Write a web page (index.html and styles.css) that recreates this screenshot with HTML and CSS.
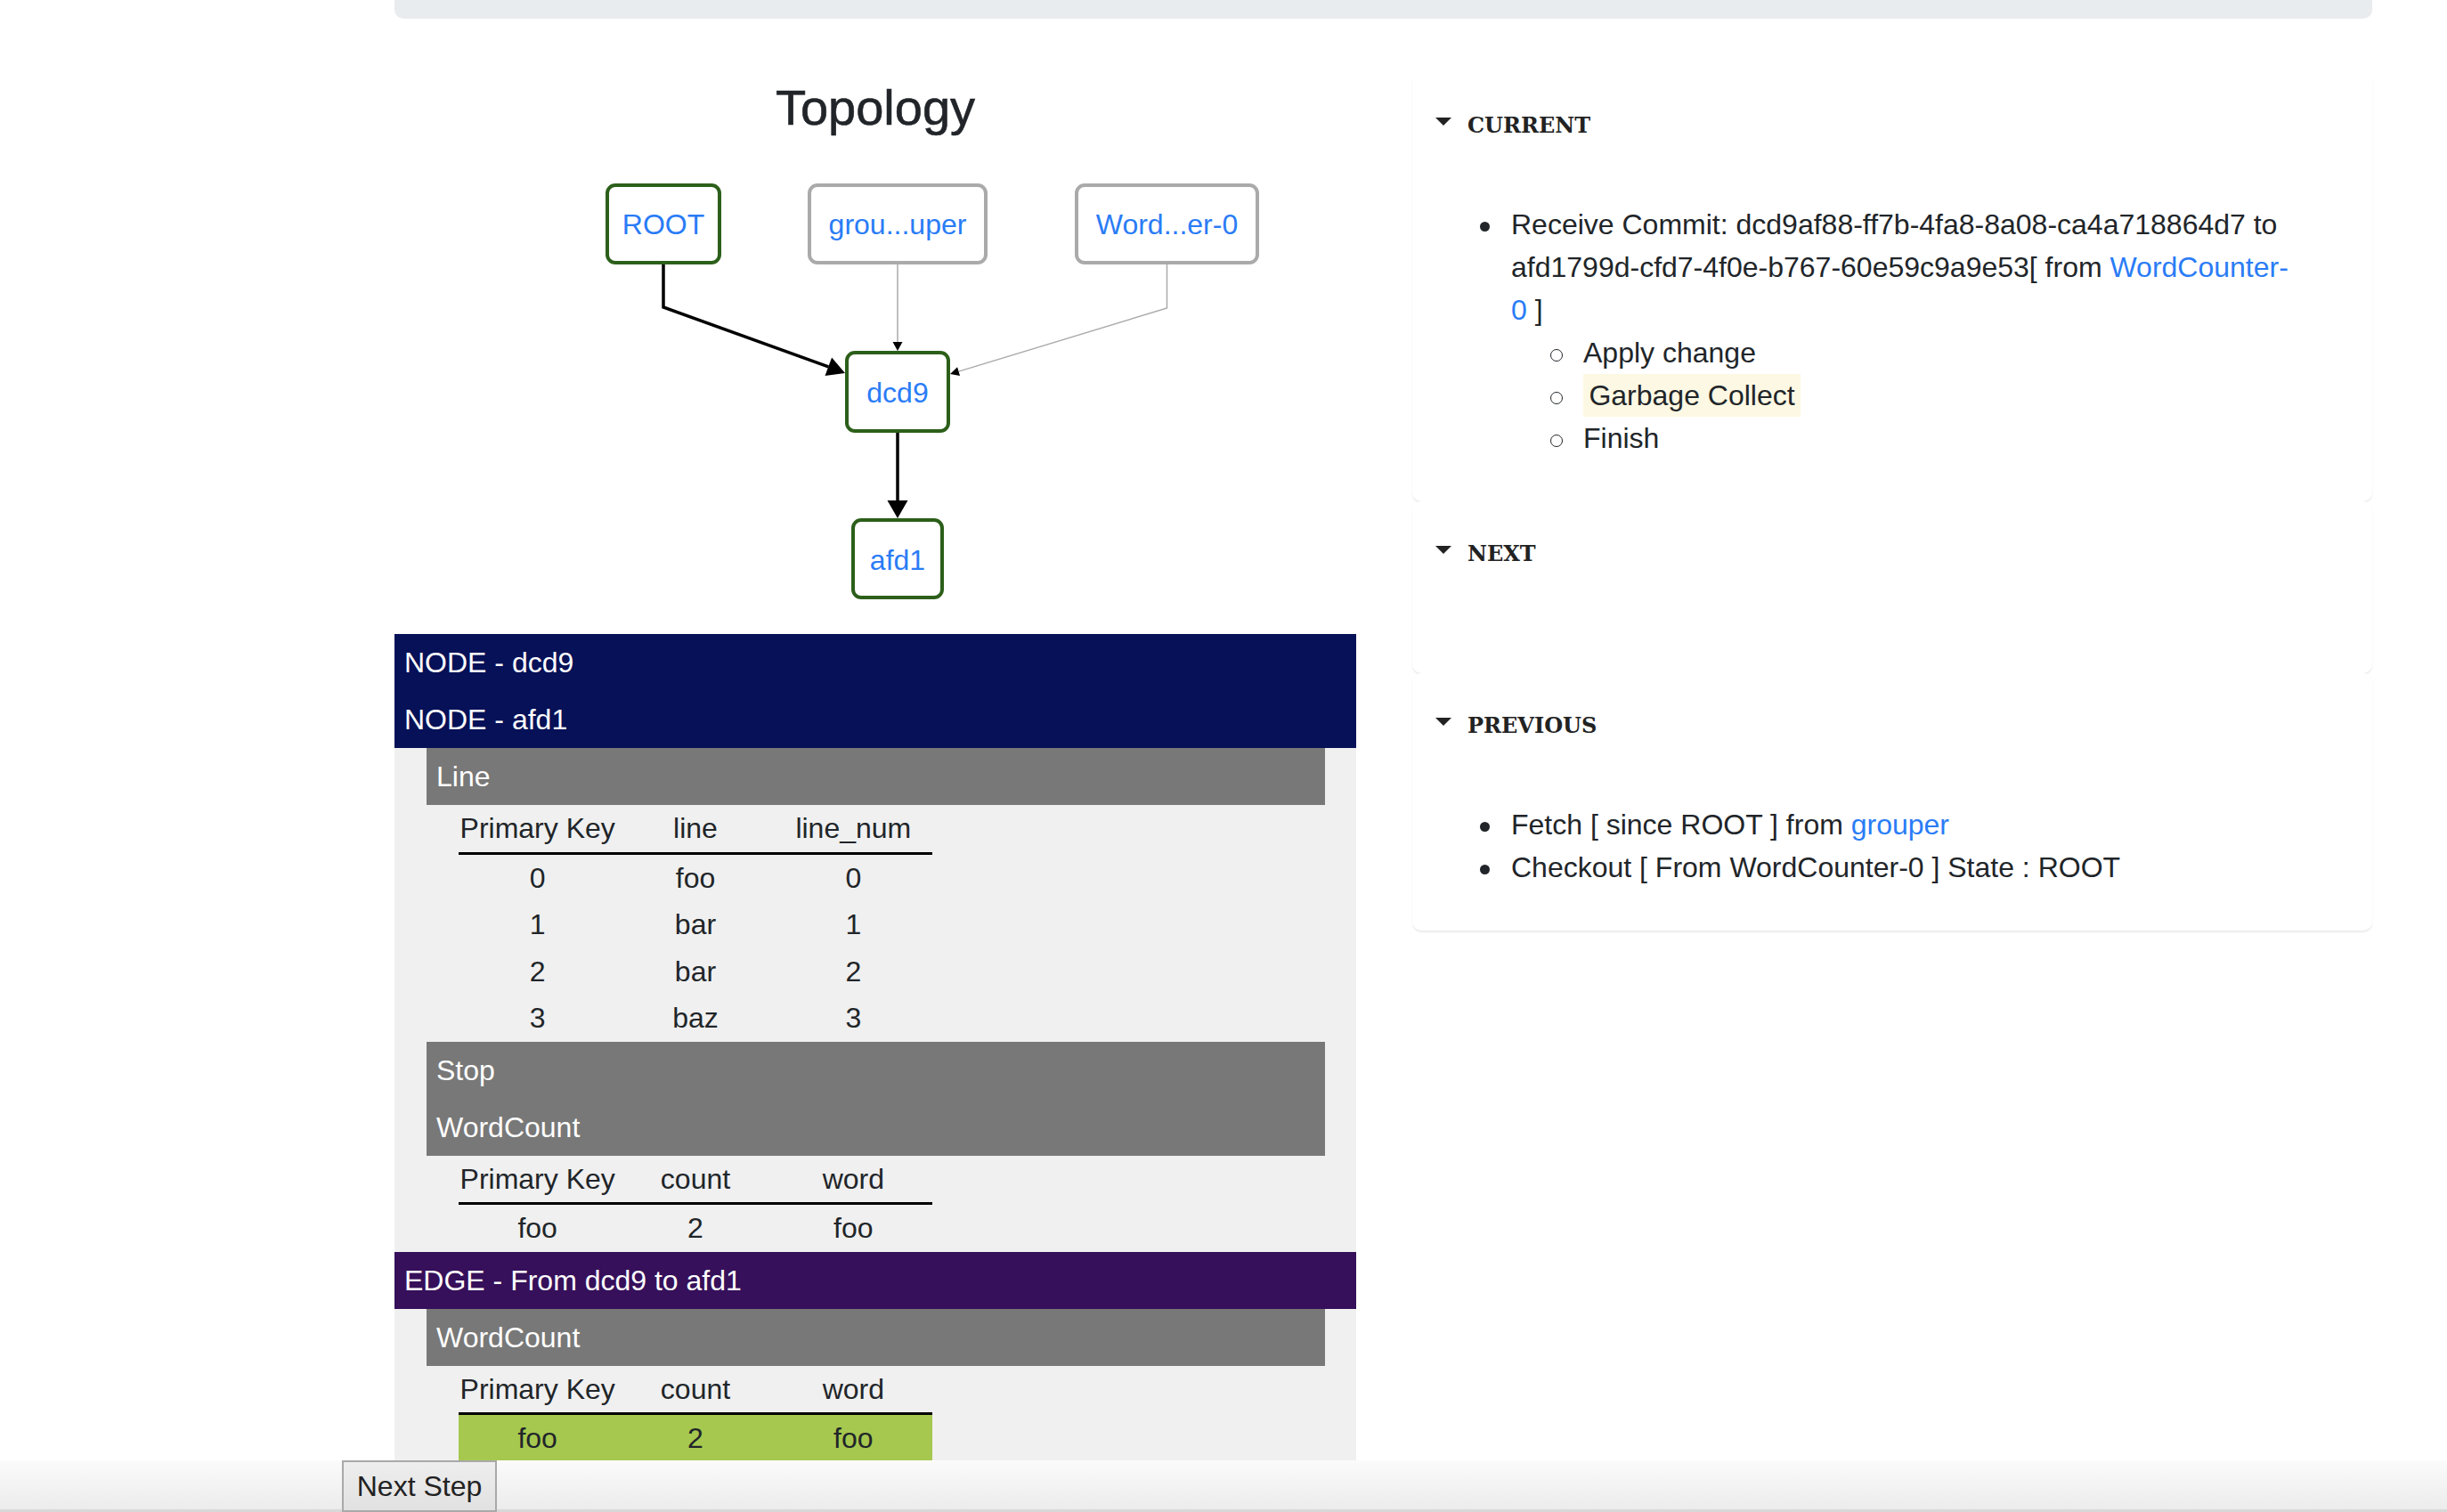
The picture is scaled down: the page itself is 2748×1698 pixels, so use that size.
FILE: index.html
```html
<!DOCTYPE html>
<html lang="en">
<head>
<meta charset="utf-8">
<title>Topology</title>
<link rel="stylesheet" href="styles.css">
</head>
<body>
<div class="page">
  <div class="topbar"></div>
  <div class="columns">
    <div class="left">
      <h3 class="title">Topology</h3>
      <svg class="graph" width="1080" height="558" viewBox="0 0 1080 558">
        <path d="M302 143 L302 191 L487.3 257.8" fill="none" stroke="#000" stroke-width="3.5"/>
        <polygon points="506,265 491.1,247.5 483.5,268.1" fill="#000"/>
        <path d="M565 143 L565 231" fill="none" stroke="#aaa" stroke-width="1.5"/>
        <polygon points="565,240 559.5,230 570.5,230" fill="#000"/>
        <path d="M867.5 143 L867.5 192 L633.6 263.1" fill="none" stroke="#aaa" stroke-width="1.5"/>
        <polygon points="624,266 635,267.9 632.1,258.3" fill="#000"/>
        <path d="M565 332 L565 410" fill="none" stroke="#000" stroke-width="3.5"/>
        <polygon points="565,428 553.5,408 576.5,408" fill="#000"/>

        <rect class="node node-active" x="239" y="54" width="126" height="87" rx="9"/>
        <text class="label" x="302" y="109">ROOT</text>
        <rect class="node node-idle" x="466" y="54" width="198" height="87" rx="9"/>
        <text class="label" x="565" y="109">grou...uper</text>
        <rect class="node node-idle" x="766" y="54" width="203" height="87" rx="9"/>
        <text class="label" x="867.5" y="109">Word...er-0</text>
        <rect class="node node-active" x="508" y="242" width="114" height="88" rx="9"/>
        <text class="label" x="565" y="298">dcd9</text>
        <rect class="node node-active" x="515" y="430" width="100" height="87" rx="9"/>
        <text class="label" x="565" y="486">afd1</text>
      </svg>

      <div class="inspector">
        <div class="sec sec-node">NODE - dcd9</div>
        <div class="sec sec-node">NODE - afd1</div>
        <div class="sec-body">
          <div class="tbl-title">Line</div>
          <table class="data">
            <thead><tr><th>Primary Key</th><th>line</th><th>line_num</th></tr></thead>
            <tbody>
              <tr><td>0</td><td>foo</td><td>0</td></tr>
              <tr><td>1</td><td>bar</td><td>1</td></tr>
              <tr><td>2</td><td>bar</td><td>2</td></tr>
              <tr><td>3</td><td>baz</td><td>3</td></tr>
            </tbody>
          </table>
          <div class="tbl-title">Stop</div>
          <div class="tbl-title">WordCount</div>
          <table class="data">
            <thead><tr><th>Primary Key</th><th>count</th><th>word</th></tr></thead>
            <tbody>
              <tr><td>foo</td><td>2</td><td>foo</td></tr>
            </tbody>
          </table>
        </div>
        <div class="sec sec-edge">EDGE - From dcd9 to afd1</div>
        <div class="sec-body">
          <div class="tbl-title">WordCount</div>
          <table class="data">
            <thead><tr><th>Primary Key</th><th>count</th><th>word</th></tr></thead>
            <tbody>
              <tr class="changed"><td>foo</td><td>2</td><td>foo</td></tr>
            </tbody>
          </table>
        </div>
      </div>
    </div>

    <div class="right">
      <details class="card" open>
        <summary><span class="caret"></span>CURRENT</summary>
        <div class="card-content">
          <ul class="events">
            <li>Receive Commit: dcd9af88-ff7b-4fa8-8a08-ca4a718864d7 to<br>afd1799d-cfd7-4f0e-b767-60e59c9a9e53[ from <a href="#">WordCounter-<br>0</a> ]
              <ul class="steps">
                <li>Apply change</li>
                <li><mark>Garbage Collect</mark></li>
                <li>Finish</li>
              </ul>
            </li>
          </ul>
        </div>
      </details>
      <details class="card" open>
        <summary><span class="caret"></span>NEXT</summary>
        <div class="card-content">
          <ul class="events"></ul>
        </div>
      </details>
      <details class="card" open>
        <summary><span class="caret"></span>PREVIOUS</summary>
        <div class="card-content">
          <ul class="events">
            <li>Fetch [ since ROOT ] from <a href="#">grouper</a></li>
            <li>Checkout [ From WordCounter-0 ] State : ROOT</li>
          </ul>
        </div>
      </details>
    </div>
  </div>
</div>

<div class="footer">
  <button class="next" type="button">Next Step</button>
</div>
</body>
</html>
```

FILE: styles.css
```css
* {
  box-sizing: border-box;
}

html,
body {
  margin: 0;
  overflow: hidden;
}

body {
  width: 2748px;
  height: 1698px;
  font-family: "Liberation Sans", Arial, sans-serif;
  font-size: 32px;
  line-height: 1.5;
  color: #212529;
  background: #fff;
}

.page {
  padding-left: 443px;
  width: 2664px;
}

.topbar {
  height: 21px;
  background: #e9ecef;
  border-radius: 0 0 10px 10px;
}

.columns {
  display: flex;
  gap: 63px;
}

.left {
  width: 1080px;
  padding-top: 66px;
}

.right {
  width: 1078px;
  padding-top: 61px;
}

.title {
  margin: 0;
  font-size: 56px;
  line-height: 1.2;
  font-weight: 500;
  text-align: center;
  -webkit-text-stroke: 0.6px #212529;
}

.graph {
  display: block;
}

.node {
  fill: #fff;
  stroke-width: 4;
}

.node-active {
  stroke: #2c5f1a;
}

.node-idle {
  stroke: #aaaaaa;
}

.label {
  font-family: "Liberation Sans", Arial, sans-serif;
  font-size: 32px;
  fill: #2a7cf6;
  text-anchor: middle;
}

/* inspector */
.inspector {
  background: #f0f0f0;
}

.sec {
  height: 64px;
  line-height: 64px;
  padding-left: 11px;
  color: #fff;
}

.sec-node {
  background: #061157;
}

.sec-edge {
  background: #36105a;
}

.sec-body {
  padding: 0 35px 0 36px;
}

.tbl-title {
  height: 64px;
  line-height: 64px;
  padding-left: 11px;
  background: #787878;
  color: #fff;
}

.data {
  width: 532px;
  margin-left: 36px;
  border-collapse: separate;
  border-spacing: 0;
  table-layout: fixed;
  text-align: center;
}

.data th,
.data td {
  padding: 8px 0;
  line-height: 36.5px;
  font-weight: normal;
  white-space: nowrap;
}

.data th {
  border-bottom: 3px solid #000;
}

.data .changed td {
  background: #a6c84f;
}

/* cards */
.card {
  display: block;
  background: #fff;
  border-radius: 10px;
  box-shadow: 0 2px 2px rgba(0, 0, 0, 0.08);
  padding: 41px 26px 47px;
}

.card summary {
  list-style: none;
  display: flex;
  align-items: flex-start;
  height: 36px;
  font-family: "DejaVu Serif", "Liberation Serif", serif;
  font-weight: bold;
  font-size: 24px;
  line-height: 36px;
  color: #222;
}

.card summary::-webkit-details-marker {
  display: none;
}

.caret {
  width: 0;
  height: 0;
  margin-top: 9px;
  margin-right: 18px;
  border-left: 9.5px solid transparent;
  border-right: 9.5px solid transparent;
  border-top: 9px solid #222;
}

.card-content {
  padding-top: 69px;
}

.events {
  margin: 0;
  padding-left: 85px;
  white-space: nowrap;
  list-style: none;
}

.events > li::before {
  content: "";
  display: inline-block;
  width: 11px;
  height: 11px;
  margin-left: -35px;
  margin-right: 24px;
  border-radius: 50%;
  background: #212529;
  vertical-align: middle;
}

.steps {
  margin: 0;
  padding-left: 79px;
  list-style: none;
}

.steps > li::before {
  content: "";
  display: inline-block;
  width: 12px;
  height: 12px;
  margin-left: -35px;
  margin-right: 23px;
  border-radius: 50%;
  border: 1.5px solid #212529;
  vertical-align: middle;
}

mark {
  background: #fcf8e3;
  color: inherit;
  padding: 0.2em;
}

a {
  color: #2a7cf6;
  text-decoration: none;
}

/* footer */
.footer {
  position: fixed;
  left: 0;
  right: 0;
  bottom: 0;
  height: 58px;
  background: linear-gradient(#fbfbfb, #ebebeb);
  box-shadow: inset 0 -3px 0 #d8d8d8;
}

.next {
  display: block;
  margin-left: 384px;
  width: 174px;
  height: 58px;
  padding: 0;
  font-family: "Liberation Sans", Arial, sans-serif;
  font-size: 32px;
  color: #222;
  background: linear-gradient(#eeeeee, #e1e1e1);
  border: 2px solid #a9a9a9;
}
```
